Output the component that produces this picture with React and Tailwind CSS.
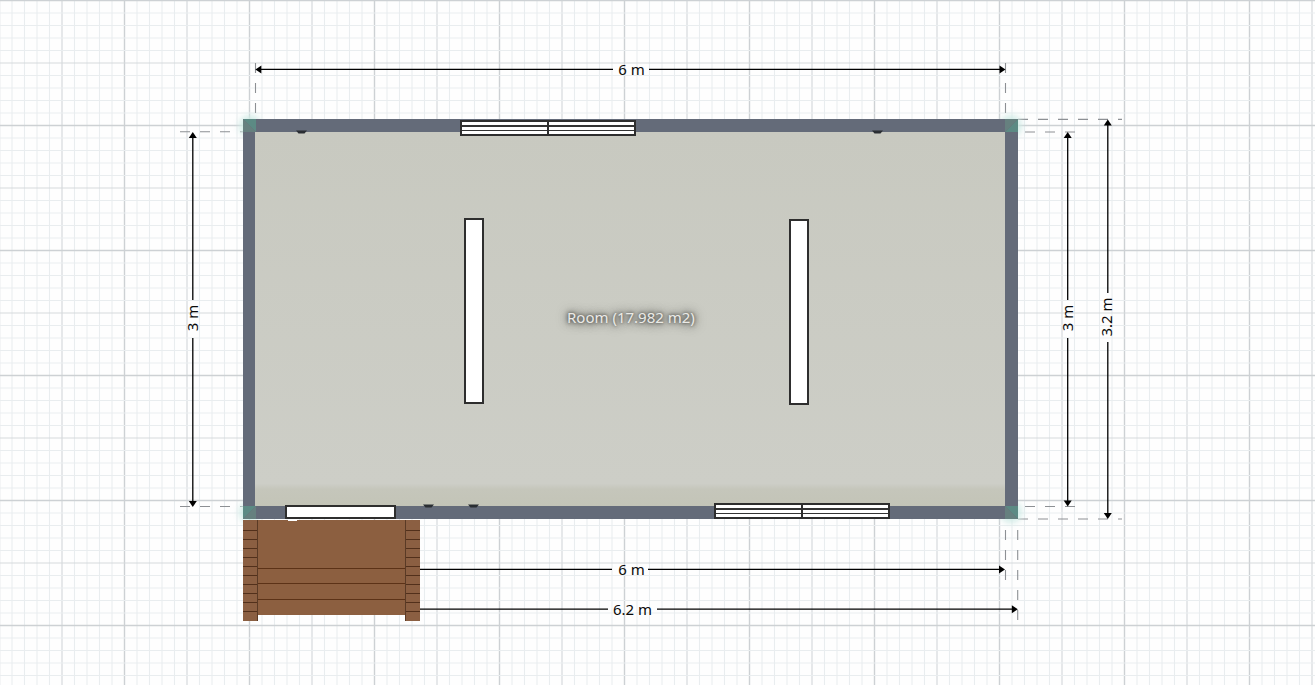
const NOTO = "font-['Noto_Sans','Open_Sans',sans-serif]";

function Grid() {
  const cols = Array.from({ length: 106 }, (_, i) => -0.5 + i * 12.5);
  const rows = Array.from({ length: 56 }, (_, i) => 0.5 + i * 12.5);
  const style = (i) => {
    if (i % 10 === 0) return ["#cdd1d4", 1.4];
    if (i % 5 === 0) return ["#d6d9dc", 1.2];
    return ["#e9edef", 1.1];
  };
  return (
    <svg className="absolute inset-0" width="1315" height="685">
      <rect width="1315" height="685" fill="#fefefe" />
      {cols.map((x, i) => {
        const [c, w] = style(i);
        return <line key={i} x1={x} x2={x} y1="0" y2="685" stroke={c} strokeWidth={w} />;
      })}
      {rows.map((y, i) => {
        const [c, w] = style(i);
        return <line key={i} x1="0" x2="1315" y1={y} y2={y} stroke={c} strokeWidth={w} />;
      })}
    </svg>
  );
}

function Dims() {
  const arrowH = (x, y, dir) => <path key={`h${x}${y}`} d={`M${x} ${y}l${-6 * dir} -4v8z`} fill="#000" />;
  const arrowV = (x, y, dir) => <path key={`v${x}${y}`} d={`M${x} ${y}l-4 ${-6 * dir}h8z`} fill="#000" />;
  return (
    <svg className="absolute inset-0" width="1315" height="685">
      <g stroke="#8d9094" strokeWidth="1.1" strokeDasharray="10 10" fill="none">
        <path d="M255.5 63V113" />
        <path d="M1005.5 63V113" />
        <path d="M180 131.7H243" />
        <path d="M180 506.5H243" />
        <path d="M1025 132H1076" />
        <path d="M1025 506.5H1076" />
        <path d="M1018 119.4H1122" />
        <path d="M1018 519H1122" />
        <path d="M1005.5 530V582" />
        <path d="M1017.7 530V622" />
      </g>
      <g stroke="#000" strokeWidth="1.3" fill="none">
        <path d="M258 69.4H613M649 69.4H1003" />
        <path d="M192.8 134V300M192.8 338V504" />
        <path d="M1067.7 134V300M1067.7 338V504" />
        <path d="M1107.8 122V293M1107.8 342V516" />
        <path d="M420 569.4H612M648 569.4H1003" />
        <path d="M420 609.2H608M657 609.2H1015" />
      </g>
      {arrowH(255.4, 69.4, -1)}
      {arrowH(1005.5, 69.4, 1)}
      {arrowV(192.8, 132, -1)}
      {arrowV(192.8, 507, 1)}
      {arrowV(1067.7, 132, -1)}
      {arrowV(1067.7, 506.6, 1)}
      {arrowV(1107.8, 119.4, -1)}
      {arrowV(1107.8, 519, 1)}
      {arrowH(1005, 569.4, 1)}
      {arrowH(1017.8, 609.2, 1)}
    </svg>
  );
}

function Corner({ className, a, b }) {
  return (
    <svg className={`absolute ${className}`} width="13" height="13" viewBox="0 0 13 13">
      <path d={a} fill="#5c8a84" />
      <path d={b} fill="#66807f" />
    </svg>
  );
}

function Win({ left, top }) {
  return (
    <div style={{ left, top }} className="absolute w-[176px] h-[16px] bg-white border-2 border-[#2e2e2e] flex">
      {[0, 1].map((i) => (
        <div key={i} className={`flex-1 flex flex-col justify-evenly ${i === 0 ? "border-r-2 border-[#2e2e2e]" : ""}`}>
          <div className="h-[1.5px] bg-[#333]" />
          <div className="h-[1.5px] bg-[#333]" />
        </div>
      ))}
    </div>
  );
}

function Label({ children, className }) {
  return (
    <span className={`absolute ${NOTO} text-[15px] leading-[20px] text-[#0a0a0a] whitespace-nowrap -translate-x-1/2 -translate-y-1/2 ${className}`}>
      {children}
    </span>
  );
}

function Fitting({ left, top }) {
  return (
    <svg style={{ left, top }} className="absolute" width="11" height="4" viewBox="0 0 11 4">
      <path d="M0 0.5H11L8.5 3.5H2.5Z" fill="#2a2e33" />
    </svg>
  );
}

function Deck() {
  const treads = [10, 19, 28, 37, 46, 55, 64, 73, 82, 91];
  const Stringer = ({ className, lineSide }) => (
    <div className={`absolute top-0 h-[101px] w-[15px] bg-[#8b5f42] ${className}`}>
      {treads.map((t) => (
        <div key={t} style={{ top: t }} className="absolute left-0 right-0 h-px bg-[#52301b]" />
      ))}
      <div className={`absolute top-0 bottom-0 w-px bg-[#5a3a25] ${lineSide}`} />
    </div>
  );
  return (
    <div className="absolute left-[243px] top-[520px] w-[177px] h-[102px]">
      <div className="absolute left-[14px] top-0 w-[149px] h-[95px] bg-[#8c5f40]">
        <div className="absolute left-0 right-0 top-[48px] h-px bg-[#5c3217]" />
        <div className="absolute left-0 right-0 top-[63px] h-px bg-[#5c3217]" />
        <div className="absolute left-0 right-0 top-[79px] h-px bg-[#5c3217]" />
      </div>
      <Stringer className="left-0" lineSide="right-0" />
      <Stringer className="left-[162px]" lineSide="left-0" />
    </div>
  );
}

export default function App() {
  const fittings = [[295.5, 130], [871.5, 130], [423, 503.5], [468, 503.5]];
  return (
    <div className="relative w-[1315px] h-[685px] overflow-hidden bg-white">
      <Grid />
      <Dims />

      {/* glow behind corners */}
      <div className="absolute left-[239px] top-[115px] w-[22px] h-[22px] rounded-full bg-[#d2ece7] blur-[3px]" />
      <div className="absolute left-[1000px] top-[115px] w-[22px] h-[22px] rounded-full bg-[#d2ece7] blur-[3px]" />
      <div className="absolute left-[239px] top-[501px] w-[22px] h-[22px] rounded-full bg-[#d2ece7] blur-[3px]" />
      <div className="absolute left-[1000px] top-[501px] w-[22px] h-[22px] rounded-full bg-[#d2ece7] blur-[3px]" />

      {/* walls and floor */}
      <div className="absolute left-[243px] top-[119px] w-[775px] h-[400px] bg-[#646b79] p-[13px_13px_13px_12px]">
        <div className="w-full h-full bg-[linear-gradient(to_bottom,#c8c9c0_0%,#cdcec7_94%,#c5c6bb_95.5%,#c3c4b7_100%)]" />
      </div>

      <Corner className="left-[243px] top-[119px]" a="M0 0H13V13Z" b="M0 0V13H13Z" />
      <Corner className="left-[1005px] top-[119px]" a="M13 0V13H0Z" b="M13 0H0V13Z" />
      <Corner className="left-[243px] top-[506px]" a="M0 13V0H13Z" b="M0 13H13V0Z" />
      <Corner className="left-[1005px] top-[506px]" a="M13 13V0H0Z" b="M13 13H0V0Z" />

      <Win left={460} top={120} />
      <Win left={714} top={503} />

      {/* ceiling lights */}
      <div className="absolute left-[464px] top-[218px] w-[20px] h-[186px] bg-white border-2 border-[#2e2e2e]" />
      <div className="absolute left-[789px] top-[219px] w-[20px] h-[186px] bg-white border-2 border-[#2e2e2e]" />

      {/* small wall fittings */}
      {fittings.map(([x, y]) => (
        <Fitting key={x} left={x} top={y} />
      ))}

      <Deck />

      {/* door */}
      <div className="absolute left-[288px] top-[517px] w-[9px] h-[4px] bg-white" />
      <div className="absolute left-[285px] top-[505px] w-[111px] h-[14px] bg-white border-2 border-[#2e2e2e]" />

      {/* room label */}
      <span className={`absolute left-[567px] top-[307px] ${NOTO} text-[15px] leading-[20px] text-[#ebebe7] whitespace-nowrap [text-shadow:0_0_3px_#5c5c58,0_0_5px_#5c5c58,0_0_8px_#66665f,0_0_12px_#77776f]`}>
        Room (17.982 m2)
      </span>

      {/* dimension labels */}
      <Label className="left-[631.5px] top-[69px]">6 m</Label>
      <Label className="left-[631.5px] top-[569px]">6 m</Label>
      <Label className="left-[632.5px] top-[609px]">6.2 m</Label>
      <Label className="left-[192px] top-[318px] -rotate-90">3 m</Label>
      <Label className="left-[1067px] top-[318px] -rotate-90">3 m</Label>
      <Label className="left-[1106px] top-[317px] -rotate-90">3.2 m</Label>
    </div>
  );
}
